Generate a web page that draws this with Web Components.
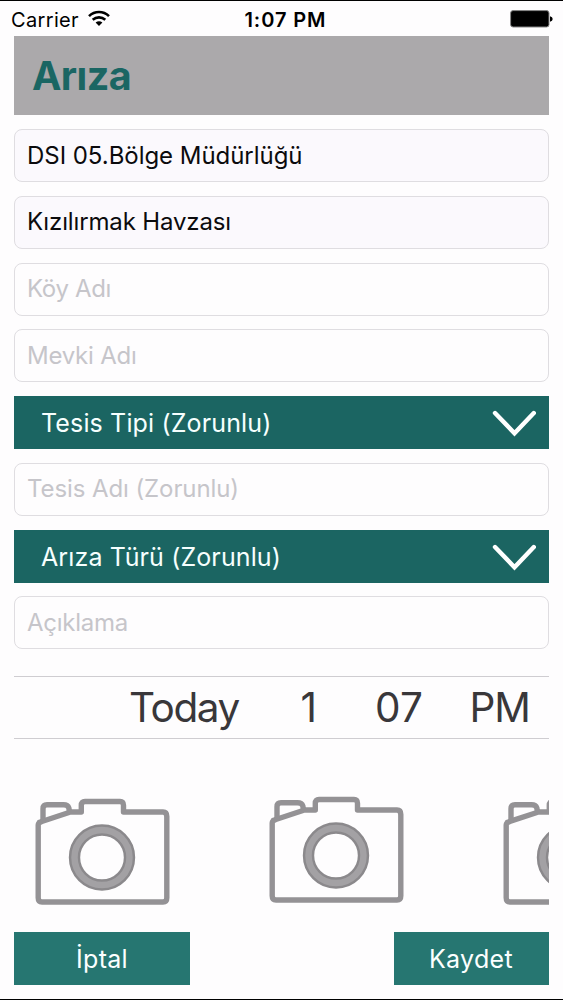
<!DOCTYPE html>
<html lang="tr">
<head>
<meta charset="utf-8">
<title>Arıza</title>
<style>
html,body{margin:0;height:100%}
body{background:#fefdfe;font-family:Inter,"Liberation Sans",sans-serif;overflow:hidden}
</style>
</head>
<body>
<fault-screen></fault-screen>
<script>
const define = (name, html, ready) => customElements.define(name, class extends HTMLElement {
  constructor() {
    super();
    const t = document.createElement('template');
    t.innerHTML = html;
    this.attachShadow({mode: 'open'}).append(t.content.cloneNode(true));
  }
  connectedCallback() { if (ready) ready.call(this); }
});

// A label whose tracking is adjusted so that it spans the width given in "span".
define('tracked-label', `
<style>:host{display:inline-block;white-space:nowrap;line-height:1.2;flex:none}span{display:inline-block}</style>
<span><slot></slot></span>`, function () {
  const s = this.shadowRoot.querySelector('span');
  const n = this.textContent.length, w = +this.getAttribute('span');
  if (w && n > 1) {
    const d = (w - s.getBoundingClientRect().width) / n;
    s.style.letterSpacing = d.toFixed(3) + 'px';
  }
});

define('wifi-icon', `
<style>:host{display:block;width:22px;height:17px}svg{display:block}</style>
<svg width="22" height="17" viewBox="0 0 22 17" fill="none" stroke="#000" stroke-width="2.6">
<path d="M1 6.1C6.8.6 15.2.6 21 6.1"/><path d="M4.7 9.8c3.7-3.3 8.9-3.3 12.6 0"/>
<path d="M11 16L7.6 12.6Q11 9.7 14.4 12.6Z" fill="#000" stroke="none"/></svg>`);

define('battery-icon', `
<style>:host{display:block;width:43px;height:18px}svg{display:block}</style>
<svg width="43" height="18" viewBox="0 0 43 18">
<rect x=".6" y=".6" width="38.4" height="16.4" rx="2.5" fill="#000" stroke="#858585" stroke-width="1"/>
<path d="M40 6.2q2.7.8 2.7 2.8t-2.7 2.8z" fill="#000"/></svg>`);

define('status-bar', `
<style>
:host{display:grid;grid-template-columns:1fr auto 1fr;align-items:center;height:35px;padding:0 10px 0 11px;font-size:20px;color:#000;box-sizing:border-box}
.l{display:flex;align-items:center;gap:9px}
.t{font-weight:600;margin-left:7px;padding-top:3px}
.l tracked-label{padding-top:3px}
battery-icon{justify-self:end;margin-top:1px}
</style>
<div class="l"><tracked-label span="68">Carrier</tracked-label><wifi-icon></wifi-icon></div>
<tracked-label class="t" span="82">1:07 PM</tracked-label>
<battery-icon></battery-icon>`);

define('title-band', `
<style>:host{display:flex;align-items:center;height:79px;background:#aba9ab;color:#1a6663;font-size:39.5px;font-weight:700;padding:3px 18px 0;box-sizing:border-box}</style>
<slot></slot>`);

define('text-field', `
<style>
:host{display:flex;align-items:center;height:53px;box-sizing:border-box;border:1px solid #dfdde1;border-radius:8px;padding:1px 12px 0;font-size:24px;color:#c6c5ca;background:#fefdfe}
:host([filled]){color:#0b0b0d;background:#fbf9fd}
</style><slot></slot>`);

define('drop-down', `
<style>
:host{display:flex;align-items:center;justify-content:space-between;height:53px;box-sizing:border-box;background:#1b6562;color:#f6fffe;font-size:25px;padding:1px 13px 0 27px}
svg{display:block}
</style><slot></slot>
<svg width="44" height="28" viewBox="0 0 44 28" fill="none" stroke="#fff" stroke-width="4.4" stroke-linecap="round"><path d="M3 4L22.5 24.2 41.8 4"/></svg>`);

define('date-wheel', `
<style>
:host{display:grid;grid-template-columns:225px 78px 106px 1fr;align-items:center;height:63px;box-sizing:border-box;border-top:1.5px solid #cfcdd1;border-bottom:1.5px solid #cfcdd1;font-size:40.5px;color:#39373a;font-weight:400;padding:2px 19px 0 0}
tracked-label{justify-self:end}
</style>
<tracked-label span="110">Today</tracked-label><tracked-label>1</tracked-label>
<tracked-label span="48">07</tracked-label><tracked-label span="60">PM</tracked-label>`);

define('camera-tile', `
<style>:host{display:block;width:234px;height:116px;flex:none}svg{display:block;filter:blur(.6px)}:host([raised]){margin-top:-2px}</style>
<svg width="160" height="116" viewBox="0 0 160 116" fill="none" stroke="#949295" stroke-width="5.4" stroke-linejoin="round">
<path d="M24 29.7L56.5 19H67.3V12.3Q67.3 8.5 71 8.5H106Q109.5 8.5 109.5 12.3V19H149Q152.8 19 152.8 23.5V104.8Q152.8 109 149 109H28Q24.2 109 24.2 104.8V32Q24.2 29.8 28 28.4"/>
<path d="M29 28V15.8Q29 11.8 33 11.8H49.5Q53.8 11.8 54.8 14.8L55.5 18.7"/>
<circle cx="88" cy="64.5" r="27.5" stroke="#8b898c" stroke-width="11.4"/><circle cx="88" cy="64.5" r="27.5" stroke="#a3a1a4" stroke-width="6.5"/>
</svg>`);

define('action-button', `
<style>:host{display:flex;align-items:center;justify-content:center;height:53px;box-sizing:border-box;background:#267671;color:#fbffff;font-size:25px;padding-top:2px}</style><slot></slot>`);

define('fault-screen', `
<style>
:host{display:flex;flex-direction:column;height:1000px;box-sizing:border-box;border-top:1px solid #000;border-bottom:1px solid #000;background:#fefdfe}
main{margin:0 14.5px 0 14px;display:flex;flex-direction:column}
.fields{display:flex;flex-direction:column;gap:13.75px;margin-top:14px}
date-wheel{margin-top:26.5px}
.photos{display:flex;overflow:hidden;height:130px;padding-top:54px;box-sizing:content-box}
.actions{display:flex;justify-content:space-between;margin-top:9px}
</style>
<status-bar></status-bar>
<main>
<title-band><tracked-label span="99">Arıza</tracked-label></title-band>
<section class="fields">
<text-field filled><tracked-label span="275.5">DSI 05.Bölge Müdürlüğü</tracked-label></text-field>
<text-field filled><tracked-label span="204">Kızılırmak Havzası</tracked-label></text-field>
<text-field><tracked-label span="84">Köy Adı</tracked-label></text-field>
<text-field><tracked-label span="109.5">Mevki Adı</tracked-label></text-field>
<drop-down><tracked-label span="230.5">Tesis Tipi (Zorunlu)</tracked-label></drop-down>
<text-field><tracked-label span="212">Tesis Adı (Zorunlu)</tracked-label></text-field>
<drop-down><tracked-label span="240">Arıza Türü (Zorunlu)</tracked-label></drop-down>
<text-field><tracked-label span="101">Açıklama</tracked-label></text-field>
</section>
<date-wheel></date-wheel>
<section class="photos"><camera-tile></camera-tile><camera-tile raised></camera-tile><camera-tile></camera-tile></section>
<section class="actions"><action-button style="width:176px"><tracked-label span="52">İptal</tracked-label></action-button><action-button style="width:155px"><tracked-label span="84">Kaydet</tracked-label></action-button></section>
</main>`);
</script>
</body>
</html>
